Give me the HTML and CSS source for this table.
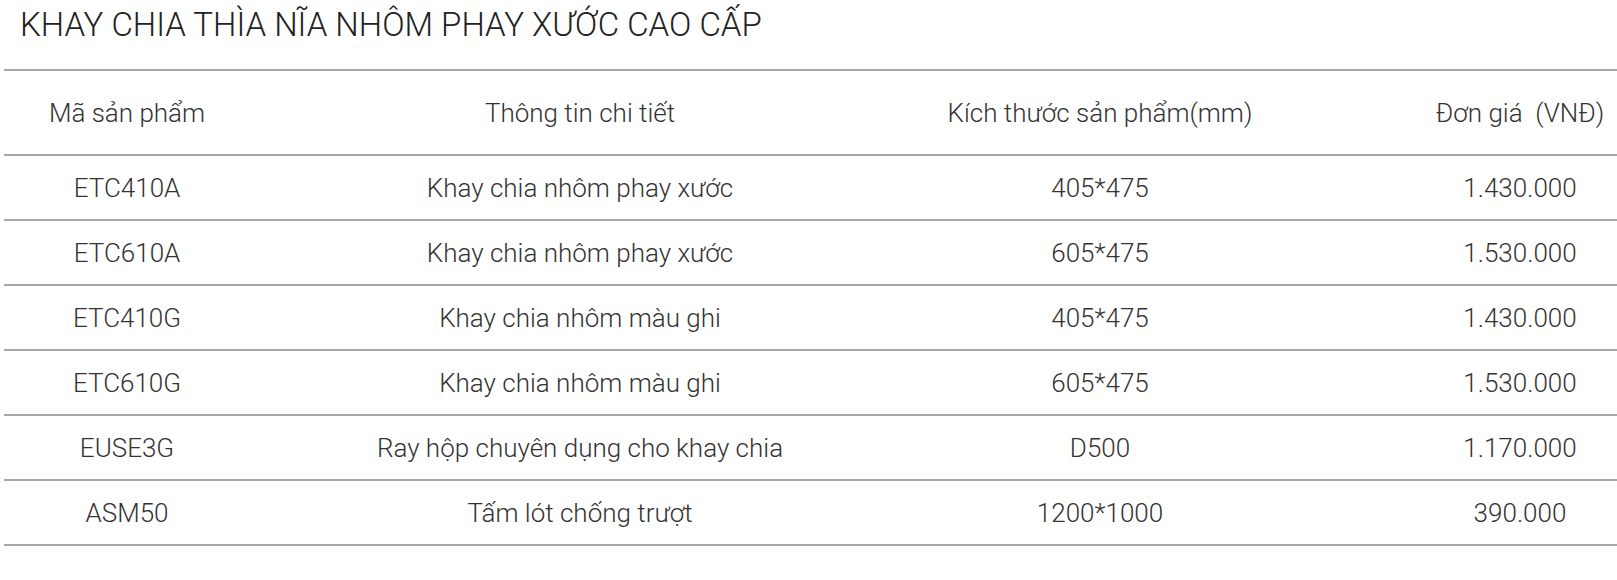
FILE: index.html
```html
<!DOCTYPE html>
<html lang="vi">
<head>
<meta charset="utf-8">
<title>Khay chia thìa nĩa</title>
<link rel="stylesheet" href="styles.css">
</head>
<body>
<h1 class="title">KHAY CHIA THÌA NĨA NHÔM PHAY XƯỚC CAO CẤP</h1>
<div class="table-wrap">
  <table class="price-table">
    <colgroup>
      <col class="c1"><col class="c2"><col class="c3"><col class="c4">
    </colgroup>
    <thead>
      <tr><th>Mã sản phẩm</th><th>Thông tin chi tiết</th><th>Kích thước sản phẩm(mm)</th><th>Đơn giá&nbsp; (VNĐ)</th></tr>
    </thead>
    <tbody>
      <tr><td>ETC410A</td><td>Khay chia nhôm phay xước</td><td>405*475</td><td>1.430.000</td></tr>
      <tr><td>ETC610A</td><td>Khay chia nhôm phay xước</td><td>605*475</td><td>1.530.000</td></tr>
      <tr><td>ETC410G</td><td>Khay chia nhôm màu ghi</td><td>405*475</td><td>1.430.000</td></tr>
      <tr><td>ETC610G</td><td>Khay chia nhôm màu ghi</td><td>605*475</td><td>1.530.000</td></tr>
      <tr><td>EUSE3G</td><td>Ray hộp chuyên dụng cho khay chia</td><td>D500</td><td>1.170.000</td></tr>
      <tr><td>ASM50</td><td>Tấm lót chống trượt</td><td>1200*1000</td><td>390.000</td></tr>
    </tbody>
  </table>
</div>
</body>
</html>
```

FILE: styles.css
```css
html, body {
  margin: 0;
  padding: 0;
  background: #ffffff;
  overflow: hidden;
}
body {
  font-family: Roboto, "Noto Sans", sans-serif;
  font-weight: 300;
  color: #333333;
}
.title {
  margin: 0;
  padding: 5px 0 0 20px;
  font-size: 33px;
  line-height: 40px;
  font-weight: 300;
  color: #222222;
}
.table-wrap {
  margin: 24px 0 0 4px;
  width: 1613px;
  overflow: hidden;
}
.price-table {
  width: 1746px;
  border-collapse: collapse;
  table-layout: fixed;
  font-size: 26px;
}
.c1 { width: 246px; }
.c2 { width: 660px; }
.c3 { width: 380px; }
.c4 { width: 460px; }
.price-table th,
.price-table td {
  text-align: center;
  font-weight: 300;
  padding: 0;
  border-top: 2px solid #a8a8a8;
  border-bottom: 2px solid #a8a8a8;
  white-space: nowrap;
}
.price-table th {
  height: 83px;
}
.price-table td {
  height: 63px;
}
```
